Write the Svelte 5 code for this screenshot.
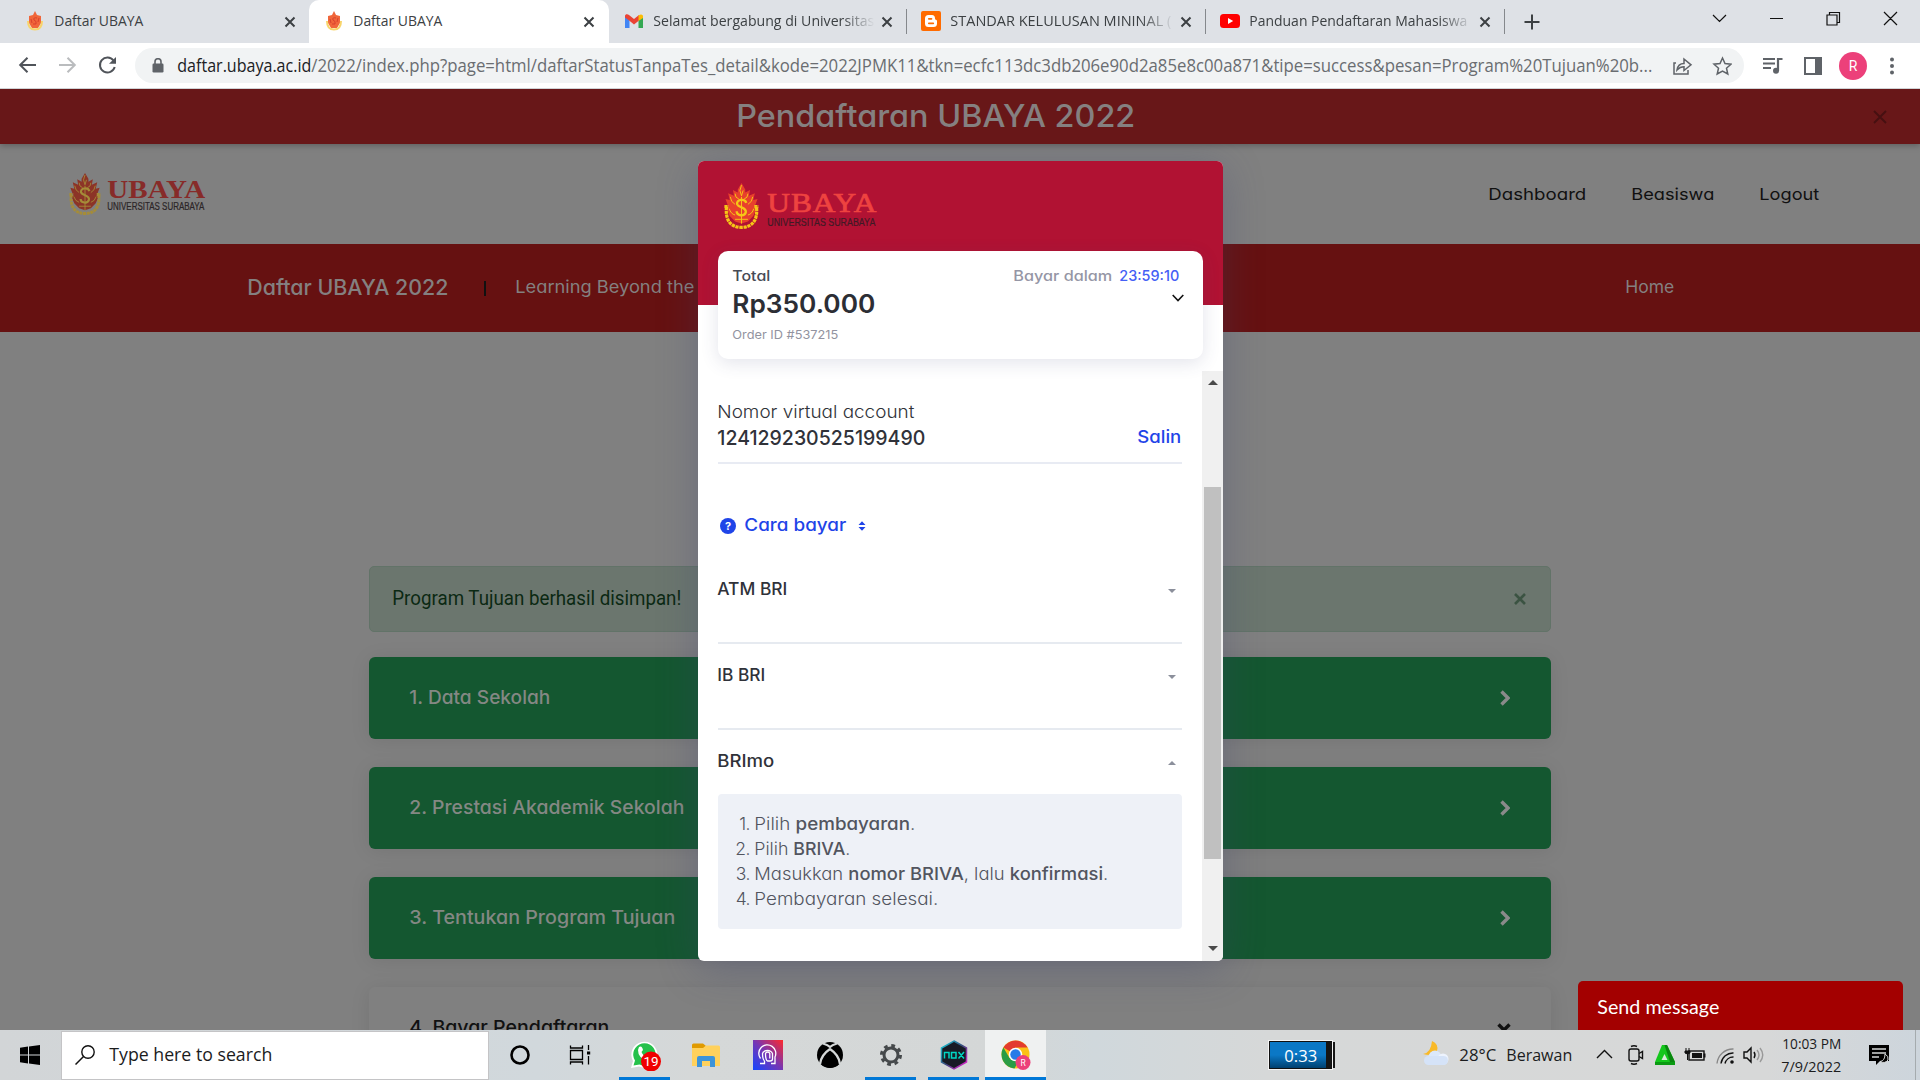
<script>
  const tabs = [
    { kind: 'ubaya', title: 'Daftar UBAYA', w: 89 },
    { kind: 'ubaya', title: 'Daftar UBAYA', w: 89, active: true },
    { kind: 'gmail', title: 'Selamat bergabung di Universitas', w: 221 },
    { kind: 'blogger', title: 'STANDAR KELULUSAN MININAL (', w: 221 },
    { kind: 'youtube', title: 'Panduan Pendaftaran Mahasiswa', w: 218 }
  ];
  const steps = [
    { title: '1. Data Sekolah', w: 141 },
    { title: '2. Prestasi Akademik Sekolah', w: 275 },
    { title: '3. Tentukan Program Tujuan', w: 266 },
    { title: '4. Bayar Pendaftaran', w: 200, open: true }
  ];
  const banks = [
    { name: 'ATM BRI', w: 70 },
    { name: 'IB BRI', w: 48 }
  ];

  // Fits a line of text to a width in pixels: the glyphs are widened or
  // narrowed within limits, and tracking takes up what is left.
  function fit(node, width) {
    const natural = node.getBoundingClientRect().width;
    const scale = Math.min(1.16, Math.max(0.78, width / natural));
    const spacing = (width / scale - natural) / (node.textContent.length - 1);
    node.style.letterSpacing = `${spacing}px`;
    node.style.width = `${width}px`;
    node.style.transform = `translateX(-0.7px) scaleX(${scale})`;
  }
</script>

{#snippet emblem(gold, red)}
  <svg class="emblem" viewBox="0 0 34 44">
    <path d="M17 0 L20.500 6 L20.500 9 L25 6.500 L24 12 L29.500 9.500 L28 16 L32 15 L29 23 L31 24 L28 31 L23 36 L17 38 L11 36 L6 31 L3 24 L5 23 L2 15 L6 16 L4.500 9.500 L10 12 L9 6.500 L13.500 9 L13.500 6Z" fill={red} />
    <path d="M1 22 H5 M29 22 H33 M3 22 C1.500 35 7 41.500 17 41.500 C27 41.500 32.500 35 31 22" fill="none" stroke={gold} stroke-width="3" stroke-dasharray="3 .7" />
    <path d="M21.500 18.500 C20 14 11.500 15.500 13 20 C14.500 23.500 22 22.500 21 27.500 C19.500 32 12.500 30.500 12.500 26.500" fill="none" stroke={gold} stroke-width="2.200" />
    <path d="M17 13 V38 M11 34 H23 M17 2 L15.500 7 L17 12 L18.500 7 M11 10 Q11 14 14.500 15 M23 10 Q23 14 19.500 15 M6.500 13 Q7 18 11 20 M27.500 13 Q27 18 23 20 M5.500 24 Q7 29 11 30 M28.500 24 Q27 29 23 30" fill="none" stroke={gold} stroke-width=".9" />
  </svg>
{/snippet}

{#snippet closeIcon()}
  <svg class="tab-x" viewBox="0 0 12 12"><path d="M1.500 1.500 L10.500 10.500 M10.500 1.500 L1.500 10.500" stroke="#3c4043" stroke-width="2" /></svg>
{/snippet}

<div class="screen">
  <div class="tabstrip">
    {#each tabs as tab, i}
      <div class="tab" class:active={tab.active} class:ruled={i > 1} class:mini={i > 1}>
        {#if tab.kind === 'ubaya'}
          <svg class="fav slim" viewBox="0 0 16 20"><path d="M8 0 L10 4 L14 5 L14 12 L11 17 H5 L2 12 L2 5 L6 4Z" fill="#f0663a" /><path d="M1 10 Q1 18.500 8 18.500 Q15 18.500 15 10" fill="none" stroke="#f8d56b" stroke-width="2" /><path d="M10 7 Q6 6 7 9 Q10 10 9 13 L6 13 M4 8 L5 12 M12 7 L11 11" stroke="#d9412d" fill="none" /></svg>
        {:else if tab.kind === 'gmail'}
          <svg class="fav" viewBox="0 0 20 20"><path d="M1 5 V17 H5.500 V9Z" fill="#4285f4" /><path d="M19 5 V17 H14.500 V9Z" fill="#34a853" /><path d="M1 5 C1 3 3.500 2.500 5 4 L10 8 L15 4 V9.500 L10 13.500 L5.500 9.800 L1 6.500Z" fill="#ea4335" /><path d="M14.500 4.500 C17 2.500 19 3.500 19 5.500 V7 L14.500 10Z" fill="#fbbc04" /></svg>
        {:else if tab.kind === 'blogger'}
          <svg class="fav" viewBox="0 0 20 20"><rect width="20" height="20" rx="2" fill="#ff6b00" /><path d="M7.500 4 H11 Q14 4 14 7.500 Q14 8.700 15 8.700 Q16 8.900 16 10 V12.500 Q16 16 12.500 16 H7.500 Q4 16 4 12.500 V7.500 Q4 4 7.500 4Z" fill="#fff" /><path d="M7.800 7.800 H10.500 M7.800 12.300 H12.300" stroke="#ff6b00" stroke-width="1.700" stroke-linecap="round" /></svg>
        {:else}
          <svg class="fav" viewBox="0 0 20 20"><rect y="3" width="20" height="14" rx="3.500" fill="#f00" /><path d="M8 7 L13.200 10 L8 13Z" fill="#fff" /></svg>
        {/if}
        <span class="tab-title" class:faded={i > 1}><span class="t" use:fit={tab.w}>{tab.title}</span></span>
        {@render closeIcon()}
      </div>
    {/each}
    <svg class="plus" viewBox="0 0 16 16"><path d="M8 .5 V15.500 M.5 8 H15.500" stroke="#3c4043" stroke-width="2" /></svg>
    <svg class="winctl" viewBox="0 0 190 16"><path d="M1 4 L7.500 10.500 L14 4 M58 7.500 H71 M115 4 H125 V14 H115Z M117.500 4 V1.500 H127.500 V11.500 H125 M172 1 L185 14 M185 1 L172 14" fill="none" stroke="#111" stroke-width="1.200" /></svg>
  </div>

  <div class="toolbar">
    <svg class="nav-icons" viewBox="0 0 100 20" fill="none" stroke-width="2">
      <path d="M19 10 H3.500 M10.500 2.700 L3.200 10 L10.500 17.300" stroke="#50545a" />
      <path d="M42 10 H57.500 M50.500 2.700 L57.800 10 L50.500 17.300" stroke="#babcbe" />
      <path d="M96.500 5.500 A7.500 7.500 0 1 0 97.700 12" stroke="#50545a" /><path d="M99 2 V8.800 H92Z" fill="#50545a" />
    </svg>
    <div class="omnibox">
      <svg class="lock" viewBox="0 0 12 15"><rect x=".5" y="5.500" width="11" height="9" rx="1.200" fill="#5f6368" /><path d="M3 6 V3.700 A3 3 0 0 1 9 3.700 V6" fill="none" stroke="#5f6368" stroke-width="1.600" /></svg>
      <span class="t domain" use:fit={134}>daftar.ubaya.ac.id</span>
      <span class="t path" use:fit={1341}>/2022/index.php?page=html/daftarStatusTanpaTes_detail&amp;kode=2022JPMK11&amp;tkn=ecfc113dc3db206e90d2a85e8c00a871&amp;tipe=success&amp;pesan=Program%20Tujuan%20b...</span>
      <svg class="omni-actions" viewBox="0 0 60 20" fill="none" stroke="#5f6368" stroke-width="1.500">
        <path d="M4 7 H2 V18 H16 V14 M5 14 Q6 7.500 12 7.500 V3 L19 8.800 L12 14.500 V10.800 Q8 10.800 5 14Z" />
        <path d="M50.500 2 L53 7.600 L59 8.200 L54.500 12.200 L55.800 18 L50.500 15 L45.200 18 L46.500 12.200 L42 8.200 L48 7.600Z" />
      </svg>
    </div>
    <svg class="playlist" viewBox="0 0 20 18"><path d="M0 2 H12 M0 6.500 H12 M0 11 H8" stroke="#5f6368" stroke-width="2" /><path d="M15 14 V2 H19.500" fill="none" stroke="#5f6368" stroke-width="2.200" /><circle cx="13" cy="13.800" r="3" fill="#5f6368" /></svg>
    <svg class="panel" viewBox="0 0 18 18"><rect x="1" y="1" width="16" height="16" fill="none" stroke="#5f6368" stroke-width="2" /><rect x="11" y="1" width="6" height="16" fill="#5f6368" /></svg>
    <div class="avatar">R</div>
    <svg class="dots" viewBox="0 0 4 18" fill="#5f6368"><circle cx="2" cy="2.500" r="2" /><circle cx="2" cy="9" r="2" /><circle cx="2" cy="15.500" r="2" /></svg>
  </div>

  <div class="page">
    <div class="banner">
      <span class="t banner-title" use:fit={399}>Pendaftaran UBAYA 2022</span>
      <svg class="banner-x" viewBox="0 0 14 14"><path d="M1 1 L13 13 M13 1 L1 13" stroke="#461011" stroke-width="1.900" /></svg>
    </div>
    <div class="header">
      <div class="brand">
        {@render emblem('#a58c38', '#8c3427')}
        <div class="wordmark">
          <span class="t serif" use:fit={98}>UBAYA</span>
          <span class="t sub" use:fit={97}>UNIVERSITAS SURABAYA</span>
        </div>
      </div>
      <div class="menu">
        <span class="t" use:fit={98}>Dashboard</span>
        <span class="t" use:fit={83}>Beasiswa</span>
        <span class="t" use:fit={60}>Logout</span>
      </div>
    </div>
    <div class="redbar">
      <span class="t red-title" use:fit={201}>Daftar UBAYA 2022</span>
      <i class="divider"></i>
      <span class="t tagline" use:fit={179}>Learning Beyond the</span>
      <span class="t home" use:fit={49}>Home</span>
    </div>
    <div class="content">
      <div class="alert">
        <span class="t" use:fit={289}>Program Tujuan berhasil disimpan!</span>
        <svg viewBox="0 0 12 12"><path d="M1 1 L11 11 M11 1 L1 11" stroke="#3b5342" stroke-width="2.600" /></svg>
      </div>
      {#each steps as step}
        <div class="step" class:open={step.open}>
          <span class="t" use:fit={step.w}>{step.title}</span>
          {#if step.open}
            <svg class="down" viewBox="0 0 14 10"><path d="M1.500 1.500 L7 7 L12.500 1.500" fill="none" stroke="#111" stroke-width="3.400" /></svg>
          {:else}
            <svg class="right" viewBox="0 0 10 16"><path d="M1.500 1.500 L8 8 L1.500 14.500" fill="none" stroke="#8a8a8a" stroke-width="3.400" /></svg>
          {/if}
        </div>
      {/each}
    </div>
    <div class="chat"><span class="t" use:fit={122}>Send message</span></div>
  </div>

  <div class="modal">
    <div class="modal-head">
      {@render emblem('#f6c617', '#e8402c')}
      <div class="wordmark">
        <span class="t serif" use:fit={109}>UBAYA</span>
        <span class="t sub" use:fit={108}>UNIVERSITAS SURABAYA</span>
      </div>
    </div>
    <div class="modal-body">
      <div class="main-col">
        <div class="va-label"><span class="t" use:fit={197}>Nomor virtual account</span></div>
        <div class="va-row">
          <span class="t number" use:fit={208}>124129230525199490</span>
          <span class="t copy" use:fit={44}>Salin</span>
        </div>
        <div class="howto">
          <span class="q">?</span>
          <span class="t" use:fit={102}>Cara bayar</span>
          <svg viewBox="0 0 8 10"><path d="M.5 4 L4 .2 L7.500 4Z M.5 6 L4 9.800 L7.500 6Z" fill="#1f44e8" /></svg>
        </div>
        {#each banks as bank}
          <div class="bank">
            <span class="t" use:fit={bank.w}>{bank.name}</span>
            <svg viewBox="0 0 8 4"><path d="M0 0 H8 L4 4Z" fill="#8b8f9b" /></svg>
          </div>
        {/each}
        <div class="bank last">
          <span class="t" use:fit={57}>BRImo</span>
          <svg viewBox="0 0 8 4"><path d="M0 4 H8 L4 0Z" fill="#8b8f9b" /></svg>
        </div>
        <div class="guide">
          <div><i>1.</i><span class="t" use:fit={161}>Pilih <b>pembayaran</b>.</span></div>
          <div><i>2.</i><span class="t" use:fit={96}>Pilih <b>BRIVA</b>.</span></div>
          <div><i>3.</i><span class="t" use:fit={354}>Masukkan <b>nomor BRIVA</b>, lalu <b>konfirmasi</b>.</span></div>
          <div><i>4.</i><span class="t" use:fit={184}>Pembayaran selesai.</span></div>
        </div>
      </div>
      <div class="scroll">
        <svg viewBox="0 0 10 5"><path d="M0 5 L5 0 L10 5Z" fill="#4a4a4a" /></svg>
        <div class="thumb"></div>
        <svg class="end" viewBox="0 0 10 5"><path d="M0 0 L5 5 L10 0Z" fill="#4a4a4a" /></svg>
      </div>
    </div>
    <div class="total">
      <div class="total-top">
        <span class="t strong" use:fit={38}>Total</span>
        <span class="t pay" use:fit={99}>Bayar dalam</span>
        <span class="t timer" use:fit={60}>23:59:10</span>
      </div>
      <div class="amount">
        <span class="t" use:fit={143}>Rp350.000</span>
        <svg viewBox="0 0 12 8"><path d="M.7 1 L6 6.500 L11.300 1" fill="none" stroke="#111" stroke-width="1.600" /></svg>
      </div>
      <div class="order"><span class="t" use:fit={106}>Order ID #537215</span></div>
    </div>
  </div>

  <div class="taskbar">
    <div class="start"><svg viewBox="0 0 20 20"><path d="M0 2.700 L8 1.500 V9.400 H0Z M9 1.400 L20 0 V9.400 H9Z M0 10.400 H8 V18.500 L0 17.300Z M9 10.400 H20 V20 L9 18.600Z" /></svg></div>
    <div class="search">
      <svg viewBox="0 0 20 20"><circle cx="13" cy="7" r="6.200" fill="none" stroke="#111" stroke-width="1.400" /><path d="M8.500 11.500 L.5 19.500" stroke="#111" stroke-width="1.500" /></svg>
      <span class="t" use:fit={163}>Type here to search</span>
    </div>
    <div class="app a1"><svg viewBox="0 0 30 30"><circle cx="15" cy="15" r="8.500" fill="none" stroke="#000" stroke-width="2.600" /></svg></div>
    <div class="app a2"><svg viewBox="0 0 30 30"><path d="M5.500 5.500 V8 H17.500 V5.500 M5.500 24.500 V22 H17.500 V24.500 M5.500 10.500 H17.500 V19.500 H5.500Z M23.500 5 V10 M23.500 16 V24.500" fill="none" stroke="#000" stroke-width="1.300" /><rect x="22" y="11.500" width="3.200" height="3" /></svg></div>
    <div class="app a3 running"><svg viewBox="0 0 32 32"><path d="M2 29 L4 22 A13 13 0 1 1 10 27.500Z" fill="#fff" /><path d="M4.500 26.500 L6 21.500 A11.200 11.200 0 1 1 10.500 25.500Z" fill="#25c14b" /><path d="M10 8 Q13 6 14 11 L12.500 13 Q14 17 18 18 L20 16.500 L23 18.500 Q22 22 18 21.500 Q9 19 9 11Z" fill="#fff" /><circle cx="22" cy="22.500" r="10" fill="#f00000" /><text x="22" y="27.200" text-anchor="middle" font-size="13.500" fill="#fff">19</text></svg></div>
    <div class="app a4"><svg viewBox="0 0 30 30"><path d="M1 5 Q1 3.500 2.500 3.500 H12 L15 6 V9 H1Z" fill="#e09a00" /><path d="M1 8 H12 L15 5.500 H27.500 Q29 5.500 29 7 V26 H1Z" fill="#ffd15c" /><path d="M6 27 V18 Q6 16 8 16 H22 Q24 16 24 18 V27 H19 V21 H11 V27Z" fill="#3d94d9" /></svg></div>
    <div class="app a5"><svg viewBox="0 0 30 30"><defs><linearGradient id="gp" x1="0" y1="1" x2="1" y2="0"><stop offset="0" stop-color="#1446ff" /><stop offset=".5" stop-color="#7636b4" /><stop offset="1" stop-color="#ff2a2a" /></linearGradient></defs><rect width="30" height="30" fill="url(#gp)" /><path d="M7 23.500 H11.500 V21 M7.500 18.500 A8.500 8.500 0 1 1 22 17 V23.500 H18 M11.500 21 Q9.500 19 9.500 13.500 A5.500 5.500 0 0 1 19.500 13.500 V19 Q19.500 21 17 21 H14.500 Q12.500 20 12.500 13.500 A2.300 2.300 0 0 1 16.800 13.500 V18.500" fill="none" stroke="#fff" stroke-width="1.300" /></svg></div>
    <div class="app a6"><svg viewBox="0 0 30 30"><circle cx="15" cy="15" r="13" /><path d="M8 3.500 Q13 5 15 7 Q17 5 22 3.500 M15 9 Q6 15 5 24 M15 9 Q24 15 25 24" fill="none" stroke="#d5d8d8" stroke-width="2.300" /><path d="M15 12 Q8 18 7 25 Q15 31 23 25 Q22 18 15 12Z" /></svg></div>
    <div class="app a7 running"><svg viewBox="0 0 30 30"><circle cx="15" cy="15" r="7" fill="none" stroke="#45494b" stroke-width="3" /><circle cx="15" cy="15" r="9.500" fill="none" stroke="#45494b" stroke-width="3" stroke-dasharray="3.730 3.730" /></svg></div>
    <div class="app a8 running"><svg viewBox="0 0 30 30"><defs><linearGradient id="gn" x1="0" y1="0" x2="1" y2="1"><stop offset="0" stop-color="#13d5df" /><stop offset=".5" stop-color="#3a4a7c" /><stop offset="1" stop-color="#f31cd6" /></linearGradient></defs><path d="M15 1 L27.500 8 V22 L15 29 L2.500 22 V8Z" fill="#171b25" stroke="url(#gn)" stroke-width="1.500" /><path d="M5.500 18.500 V12.500 H10 V18.500 M12.500 12.500 H17 V18 H12.500Z M19.500 12 L25 18.500 M25 12 L19.500 18.500" fill="none" stroke="#00d6c4" stroke-width="1.500" /></svg></div>
    <div class="app a9 running current"><svg viewBox="0 0 32 32"><circle cx="15.500" cy="15.500" r="14" fill="#fbc116" /><path d="M15.500 15.500 L3.400 8.500 A14 14 0 0 1 27.600 8.500 H15.500Z" fill="#e33b2e" /><path d="M3.400 8.500 A14 14 0 0 0 14.500 29.500 L20.500 18.500 L9.500 19Z" fill="#2a9c46" /><circle cx="15.500" cy="15.500" r="6.800" fill="#fff" /><circle cx="15.500" cy="15.500" r="5.200" fill="#287be8" /><circle cx="23" cy="23.500" r="7.500" fill="#ec407a" /><text x="23" y="26.700" text-anchor="middle" font-size="8.500" fill="#fff">R</text></svg></div>
    <div class="battery"><span class="t" use:fit={33}>0:33</span></div>
    <svg class="weather" viewBox="0 0 30 30"><path d="M12 3 Q19 6 17 13 Q14 19 3 16 Q11 15 12 3Z" fill="#f9b928" /><circle cx="15" cy="19" r="6.500" fill="#dbe8fb" /><circle cx="23" cy="21" r="5.500" fill="#edf3fd" /><rect x="4" y="18" width="24" height="9" rx="4.500" fill="#d5e3f8" /></svg>
    <span class="t temp" use:fit={37}>28°C</span>
    <span class="t cond" use:fit={66}>Berawan</span>
    <svg class="tray" viewBox="0 0 180 24" fill="none" stroke="#111" stroke-width="1.400">
      <path d="M2 15 L9.500 7.500 L17 15" />
      <rect x="34" y="6" width="10" height="12" rx="2" /><path d="M44 10.500 L47.500 8.500 V15.500 L44 13.500 M36 3.500 Q39 2 42 3.500 M36 20.500 Q39 22 42 20.500" />
      <path d="M67 2 H72 L80 19 V22 H60 V19Z" fill="#14c71c" stroke="none" /><path d="M69.500 2 H72 L80 19 H75Z" fill="#09860f" stroke="none" /><path d="M60 19 H80 V22 H60Z" fill="#0a9a12" stroke="none" /><path d="M69.500 11 L72.500 17 H66.500Z" fill="#d5ecd6" stroke="none" />
      <rect x="94" y="8" width="15" height="9" /><path d="M109.500 10.500 V14.500" stroke-width="2" /><rect x="97" y="10" width="10" height="5" fill="#111" stroke="none" /><path d="M91 5 V8 M94 5 V8 M90 8 H95 V10 Q92.500 12 90 10Z M92.500 11 V17" fill="#111" stroke-width="1" />
      <path d="M122 20.500 A16 16 0 0 1 138.500 6" stroke="#888" /><path d="M126 20.500 A12 12 0 0 1 138.500 10 M130 20.500 A8.500 8.500 0 0 1 138.500 14" /><circle cx="137" cy="19" r="1.800" fill="#111" stroke="none" />
      <path d="M149 9 H152 L156 5 V19 L152 15 H149Z M159 9 Q161 12 159 15" /><path d="M162 7 Q166 12 162 17 M165 5 Q170.500 12 165 19" stroke="#999" />
    </svg>
    <div class="clock">
      <span class="t" use:fit={59}>10:03 PM</span>
      <span class="t" use:fit={60}>7/9/2022</span>
    </div>
    <svg class="notice" viewBox="0 0 22 22"><path d="M1 1 H21 V17 H12 L8 21 V17 H1Z" /><path d="M4 5 H18 M4 9 H18 M4 13 H11" stroke="#d5d8d8" stroke-width="1.300" /><path d="M17 10 Q21 12 20 16 Q17 20 12 17.500 Q17 17 17 10Z" stroke="#d5d8d8" stroke-width="1" /></svg>
    <i class="peek"></i>
  </div>
</div>

<style>
  :global(body) { overflow: hidden; }
  .screen { position: relative; width: 1920px; height: 1080px; overflow: hidden; display: flex; flex-direction: column; font-family: Inter, "Liberation Sans", sans-serif; font-feature-settings: "cv11"; box-sizing: border-box; }
  .screen :global(*) { box-sizing: border-box; }
  svg { display: block; flex: none; }
  i { font-style: normal; }
  .t { display: block; width: max-content; white-space: nowrap; flex: none; transform-origin: left center; }

  .tabstrip { height: 43px; flex: none; display: flex; align-items: center; background: #dee1e6; font-family: "Open Sans", sans-serif; font-size: 15px; color: #3c4043; }
  .tab { width: 300px; height: 43px; padding: 0 14px 0 17px; display: flex; align-items: center; }
  .tab:first-child { width: 309px; padding-left: 27px; padding-right: 13px; }
  .active { background: #fff; border-radius: 10px 10px 0 0; }
  .mini { width: 298px; padding-left: 15px; }
  .mini + .mini { width: 299px; padding-left: 14px; }
  .ruled { background: linear-gradient(#85888c, #85888c) no-repeat right 9px / 1.500px 25px; }
  .fav { width: 20px; height: 20px; margin: -1px 10px 0 0; }
  .slim { width: 16px; margin-right: 12px; }
  .tab-title { flex: 1; min-width: 0; overflow: hidden; margin: -3px 6px 0 0; }
  .faded { -webkit-mask-image: linear-gradient(90deg, #000 85%, transparent); mask-image: linear-gradient(90deg, #000 85%, transparent); }
  .tab-x { width: 12px; height: 12px; }
  .plus { width: 16px; height: 16px; margin-left: 19px; }
  .winctl { width: 190px; height: 16px; margin: -5px 0 0 172px; }

  .toolbar { height: 46px; flex: none; display: flex; align-items: center; background: #fff; border-bottom: 1px solid #d0d3d6; padding-left: 17px; }
  .nav-icons { width: 100px; height: 20px; margin: -2px 18px 0 0; }
  .omnibox { width: 1609px; height: 35px; display: flex; align-items: center; border-radius: 18px; background: #f1f3f4; padding-left: 17px; font-family: "Open Sans", sans-serif; font-size: 18px; }
  .omnibox .t { margin-top: -2px; }
  .lock { width: 12px; height: 15px; margin-right: 14px; }
  .domain { color: #202124; }
  .path { color: #6a6d71; }
  .omni-actions { width: 60px; height: 20px; margin-left: 19px; }
  .playlist { width: 20px; height: 18px; margin-left: 19px; }
  .panel { width: 18px; height: 18px; margin-left: 21px; }
  .avatar { width: 28px; height: 28px; margin-left: 17px; border-radius: 50%; background: #ec407a; color: #fff; font: 14px/28px Roboto, sans-serif; text-align: center; }
  .dots { width: 4px; height: 18px; margin-left: 23px; }

  .page { position: relative; height: 941px; flex: none; background: #808080; display: flex; flex-direction: column; overflow: hidden; }
  .banner { height: 55px; flex: none; background: #681718; box-shadow: 0 2px 6px rgba(0, 0, 0, .25); display: flex; align-items: center; justify-content: space-between; padding: 0 33px 0 737px; z-index: 1; }
  .banner-title { font-size: 31.500px; font-weight: 500; color: #858080; margin-top: -2px; }
  .banner-x { width: 14px; height: 14px; }
  .header { height: 100px; flex: none; display: flex; align-items: center; justify-content: space-between; padding: 0 100px 0 68px; }
  .brand { display: flex; align-items: center; }
  .emblem { width: 34px; height: 43px; }
  .wordmark { margin-left: 6px; display: flex; flex-direction: column; padding-top: 4px; }
  .serif { font: bold 25.500px/21px "Liberation Serif", serif; color: #872b29; }
  .sub { font: 10px/14px "Liberation Sans", sans-serif; color: #2b2527; -webkit-text-stroke: .2px #2b2527; }
  .menu { display: flex; gap: 45px; font-size: 16.500px; color: #111; margin-top: -1px; }
  .redbar { height: 88px; flex: none; background: #661111; color: #848080; display: flex; align-items: center; padding: 0 245px 0 248px; }
  .red-title { font-size: 21.500px; font-weight: 500; margin-top: -3px; }
  .divider { width: 2px; height: 15px; background: #111; margin: 0 30px 0 35px; }
  .tagline { font-size: 17px; margin-top: -3px; }
  .home { font-size: 17px; margin-left: auto; margin-top: -2px; }

  .content { width: 1182px; margin: 234px 0 0 369px; display: flex; flex-direction: column; }
  .alert { height: 66px; flex: none; border: 1px solid #627368; border-radius: 5px; background: #6b766e; color: #0b2913; font: 19.500px Roboto, sans-serif; display: flex; align-items: center; justify-content: space-between; padding: 0 24px 0 23px; margin-bottom: 25px; }
  .alert svg { width: 12px; height: 12px; margin-top: -1px; }
  .alert .t, .step .t { margin-top: -2px; }
  .step { height: 82px; flex: none; margin-bottom: 28px; border-radius: 6px; background: #145730; box-shadow: 0 2px 20px rgba(0, 0, 0, .09); color: #848884; font-size: 18.500px; font-weight: 500; display: flex; align-items: center; justify-content: space-between; padding: 0 41px 0 40.500px; }
  .step.open { background: #808080; color: #111; padding-right: 40px; }
  .right { width: 10px; height: 16px; margin-top: -1px; }
  .down { width: 14px; height: 10px; }
  .chat { position: absolute; right: 17px; bottom: 0; width: 325px; height: 49px; border-radius: 5px 5px 0 0; background: #a30000; color: #fff; font: 19.500px/51px Lato, sans-serif; padding-left: 19.500px; }

  .modal { position: absolute; left: 698px; top: 161px; width: 525px; height: 800px; border-radius: 6px; background: #fff; box-shadow: 0 8px 40px rgba(58, 65, 111, .32); display: flex; flex-direction: column; }
  .modal-head { height: 144px; flex: none; border-radius: 6px 6px 0 0; background: #b11233; display: flex; align-items: flex-start; padding: 22px 24px; }
  .modal-head .emblem { width: 39px; height: 47px; }
  .modal-head .wordmark { margin-left: 7px; padding-top: 7px; }
  .modal-head .serif { font-size: 27px; line-height: 26px; font-weight: 400; -webkit-text-stroke: .7px #ee4340; color: #ee4340; }
  .modal-head .sub { color: #4d1425; font-size: 10.500px; line-height: 13px; }
  .modal-body { flex: 1; display: flex; padding-top: 66px; }
  .main-col { width: 504px; padding: 28px 20px 0; color: #303239; display: flex; flex-direction: column; }
  .va-label { font-size: 17.500px; font-weight: 300; line-height: 26px; }
  .va-row { height: 39px; display: flex; justify-content: space-between; border-bottom: 2px solid #e8ebf3; font-size: 20px; font-weight: 500; line-height: 26px; }
  .copy { color: #1f44e8; font-size: 17px; line-height: 25px; }
  .howto { height: 26px; margin-top: 48px; display: flex; align-items: center; color: #1f44e8; font-size: 17px; font-weight: 500; padding-left: 2px; }
  .q { width: 16px; height: 16px; margin: 2px 9px 0 0; border-radius: 50%; background: #1f44e8; color: #fff; font-size: 11px; line-height: 16px; font-weight: 700; text-align: center; }
  .howto svg { width: 8px; height: 10px; margin: 2px 0 0 11px; }
  .bank { height: 86px; flex: none; display: flex; justify-content: space-between; align-items: center; padding: 0 6px 22px 0; border-bottom: 2px solid #e6eaf0; font-size: 17px; font-weight: 500; }
  .howto + .bank { height: 106px; padding-bottom: 2px; }
  .bank svg { width: 8px; height: 4px; margin-top: 3px; }
  .last { height: 64px; padding-bottom: 2px; border: 0; }
  .guide { height: 135px; border-radius: 4px; background: #eef1f7; color: #52555f; padding: 17px 0 0 14px; font-size: 17.500px; font-weight: 300; line-height: 25px; }
  .guide div { display: flex; }
  .guide i { width: 18px; margin-right: 5px; text-align: right; letter-spacing: -.5px; }
  .guide b { font-weight: 500; }
  .scroll { width: 21px; background: #f0f0f0; display: flex; flex-direction: column; align-items: center; border-radius: 0 0 5px 0; padding: 9px 0 10px; }
  .scroll svg { width: 10px; height: 5px; }
  .thumb { width: 17px; height: 372px; margin-top: 102px; background: #c0c0c0; }
  .scroll .end { margin-top: auto; }
  .total { position: absolute; left: 20px; top: 90px; width: 485px; height: 108px; border-radius: 10px; background: #fff; box-shadow: 0 4px 18px rgba(60, 65, 110, .14); padding: 13px 19px 0 15px; color: #2c2e35; }
  .total-top { height: 22px; display: flex; align-items: center; padding-right: 4px; font-size: 14.500px; font-weight: 500; }
  .strong { color: #474a55; }
  .pay { margin-left: auto; color: #9596a5; }
  .timer { margin-left: 7px; color: #4560f5; }
  .amount { height: 36px; display: flex; align-items: center; justify-content: space-between; font-size: 25px; font-weight: 600; }
  .amount svg { width: 12px; height: 8px; margin-top: -12px; }
  .order { font-size: 12px; line-height: 25px; color: #9293a0; }

  .taskbar { height: 50px; flex: none; display: flex; align-items: center; background: linear-gradient(90deg, #d2d5d7, #d1d8dc 28%, #d5d8d8 36%, #d4d7d7 52%, #d0d8dc 57%, #d6d8d8 66%, #d7d8d8 92%, #cdd5dc); font-family: "Open Sans", sans-serif; color: #1b1c1d; }
  .taskbar > .t { margin-top: -1px; }
  .start { width: 60.500px; padding-left: 20px; }
  .start svg, .search svg { width: 20px; height: 20px; }
  .search { width: 428.500px; height: 49px; margin-top: 1px; background: #fff; border: 1px solid #c4c4c6; display: flex; align-items: center; padding-left: 13.500px; font-size: 18px; }
  .search svg { margin-top: -2px; }
  .search .t { margin: -3px 0 0 15px; }
  .app { width: 61px; height: 50px; flex: none; display: flex; align-items: center; justify-content: center; font-family: Roboto, sans-serif; }
  .app svg { width: 30px; height: 30px; }
  .app.a3 svg, .app.a9 svg { width: 32px; height: 32px; }
  .a2 { margin-left: -1px; }
  .a3 { margin-left: 4px; }
  .a5 { margin-left: 1px; }
  .a6 { margin-left: 1px; }
  .a8 { margin-left: 2px; }
  .a9 { margin-left: 1px; background: #eff1f1; }
  .running { background-image: linear-gradient(#0078d7, #0078d7); background-repeat: no-repeat; background-size: 51px 3px; background-position: center bottom; }
  .current { background-size: 100% 3px; }
  .battery { width: 63px; height: 28px; flex: none; margin-left: 223px; margin-right: 4px; background: linear-gradient(90deg, transparent 91%, #151515 91%), linear-gradient(#0b78c6 50%, #00406f); border: 1px solid #111; outline: 1px solid #f4f4f4; box-shadow: 4px 0 0 -1px #151515; display: flex; align-items: center; padding-left: 15px; color: #fff; font-size: 16.500px; }
  .weather { width: 30px; height: 30px; margin: -4px 0 0 84px; }
  .temp, .cond { font-size: 16.500px; }
  .temp { margin-left: 10px; }
  .cond { margin-left: 10px; }
  .tray { width: 180px; height: 24px; margin-left: 22px; }
  .clock { display: flex; flex-direction: column; align-items: center; font-size: 14px; line-height: 23px; margin-left: 7px; margin-top: -1px; }
  .notice { width: 22px; height: 22px; margin-left: 26px; }
  .peek { width: 1px; height: 50px; margin-left: 25px; background: #a5abae; }
</style>
